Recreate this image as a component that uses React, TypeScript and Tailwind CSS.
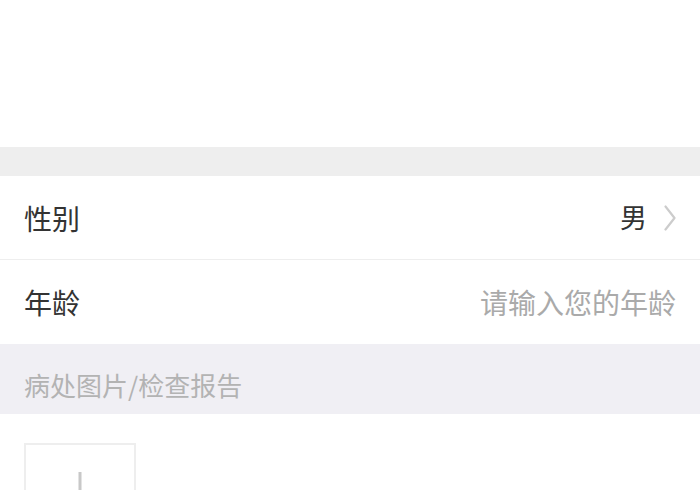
const font = { fontFamily: '"Noto Sans CJK SC", "Noto Sans", sans-serif' };

export default function App() {
  return (
    <div className="w-[700px] h-[490px] overflow-hidden bg-white" style={font}>
      <div className="h-[147px] bg-white" />
      <div className="h-[29px] bg-[#eeeeee]" />

      <div className="h-[84px] flex items-center justify-between pl-6 pr-[24px] border-b border-[#eeeeee]">
        <span className="text-[28px] text-[#333333]">性别</span>
        <div className="flex items-center gap-[17px]">
          <span className="text-[27px] text-[#333333]">男</span>
          <svg width="12" height="26" viewBox="0 0 12 26" fill="none">
            <polyline points="1.5,1.5 10.5,13 1.5,24.5" stroke="#cccccc" strokeWidth="2.2" strokeLinecap="round" strokeLinejoin="round" />
          </svg>
        </div>
      </div>

      <div className="h-[84px] flex items-center justify-between pl-6 pr-6">
        <span className="text-[28px] text-[#333333]">年龄</span>
        <span className="text-[28px] text-[#aaaaaa]">请输入您的年龄</span>
      </div>

      <div className="h-[70px] flex items-center pl-6 pt-[10px] bg-[#f0eff4]">
        <span className="text-[26px] text-[#b3b3b3]">病处图片/检查报告</span>
      </div>

      <div className="pt-[29px] pl-6">
        <div className="w-[112px] h-[112px] border-2 border-[#eeeeee] flex items-center justify-center">
          <div className="relative w-[54px] h-[54px]">
            <div className="absolute left-1/2 top-0 w-[3px] h-full -translate-x-1/2 bg-[#c8c8c8]" />
            <div className="absolute top-1/2 left-0 h-[3px] w-full -translate-y-1/2 bg-[#c8c8c8]" />
          </div>
        </div>
      </div>
    </div>
  );
}
